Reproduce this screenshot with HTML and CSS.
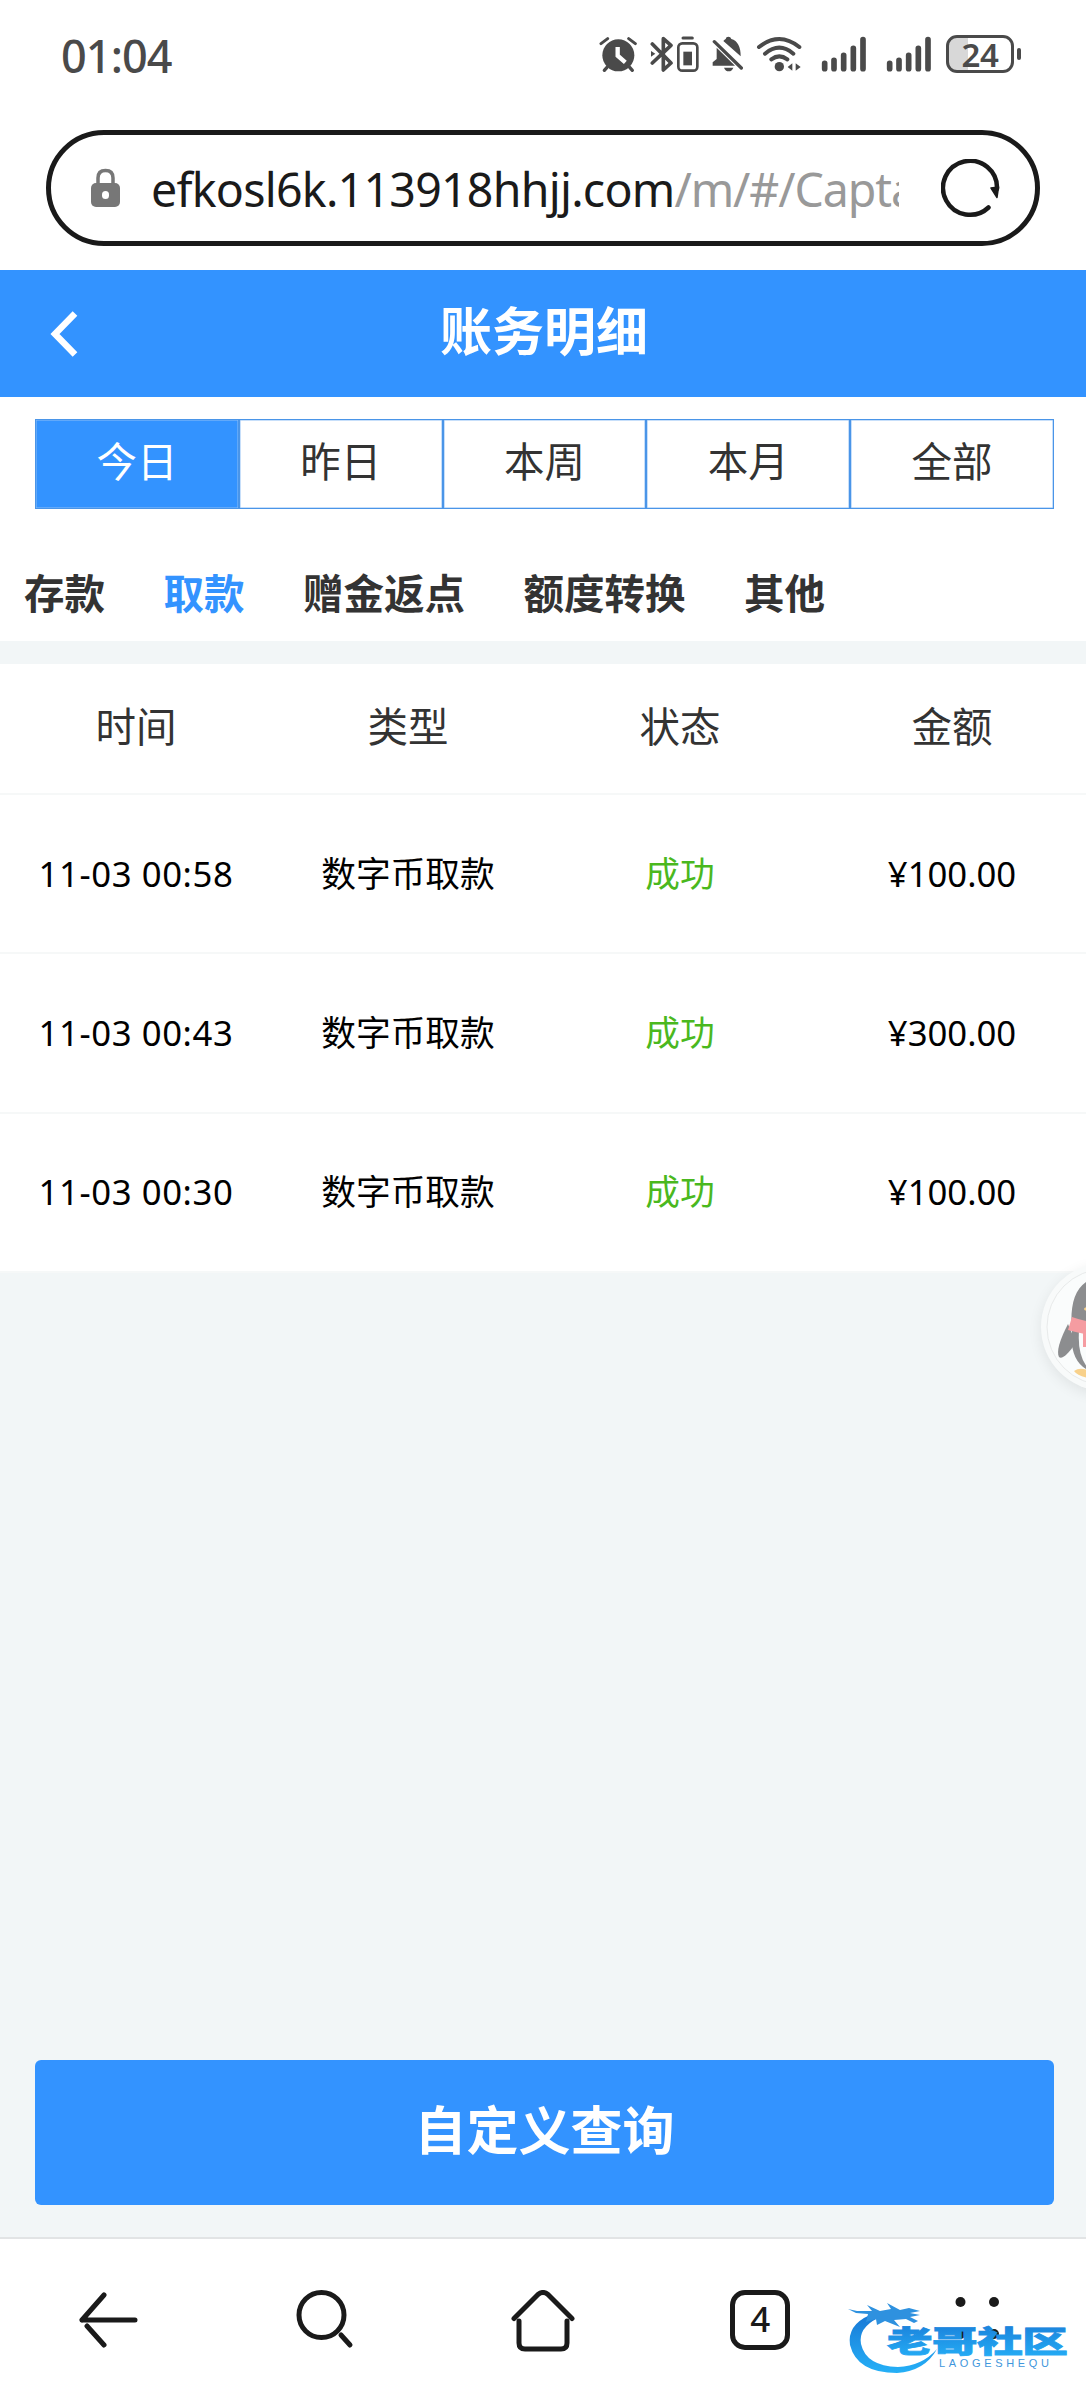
FILE: index.html
```html
<!DOCTYPE html>
<html lang="zh-CN">
<head>
<meta charset="utf-8">
<title>账务明细</title>
<link rel="stylesheet" href="styles.css">
</head>
<body>
<div class="screen">
  <div class="status">
    <span class="clock">01:04</span>
    <div class="status-icons">
      <svg width="38" height="42" viewBox="58 40 114 126" fill="none" stroke="#4a4a4a" stroke-linecap="round"><circle cx="116" cy="107" r="48" fill="#4a4a4a" stroke="none"/><path d="M64 72L84 57M147 57L167 72" stroke-width="9"/><path d="M82 143L74 152M150 143L158 152" stroke-width="10"/><path d="M114 82V108L137 128" stroke="#fff" stroke-width="13" stroke-linecap="butt"/></svg>
      <svg class="bt" width="50" height="42" viewBox="210 40 150 126" fill="none" stroke="#4a4a4a" stroke-linecap="round" stroke-linejoin="round"><path d="M217 73L273 130L250 151V57L273 77L217 130" stroke-width="11"/><path d="M213 94L226 102L213 111Z" fill="#4a4a4a" stroke="none"/><path d="M309 55H337" stroke-width="9"/><rect x="295" y="71" width="57" height="82" rx="12" stroke-width="8"/><path d="M310 96H336V137H310Z" fill="#4a4a4a" stroke="none"/></svg>
      <svg class="bell" width="32" height="42" viewBox="396 40 96 126" fill="#4a4a4a"><path d="M410 84L465 138H398V128L410 118ZM430 64Q434 59 437 58Q438 51 445 51Q452 51 454 58Q482 66 482 110ZM432 144H460Q456 155 446 155Q436 155 432 144Z"/><path d="M403 66L484 145" stroke="#4a4a4a" stroke-width="10" stroke-linecap="round"/></svg>
      <svg class="wifi" width="46" height="42" viewBox="528 40 138 126" fill="none" stroke="#4a4a4a" stroke-width="12" stroke-linecap="round"><path d="M537 82Q598 34 658 82M555 102Q598 66 640 102M574 119Q598 101 622 119"/><circle cx="598" cy="141" r="14" fill="#4a4a4a" stroke="none"/><path d="M637 131V153L623 142ZM647 131V153L662 142Z" fill="#4a4a4a" stroke="none"/></svg>
      <svg class="sig1" width="46" height="42" viewBox="725 40 138 126" stroke="#4a4a4a" stroke-width="17" stroke-linecap="round"><path d="M736 131V147M764 122V147M793 107V147M822 86V147M851 60V147"/></svg>
      <svg class="sig2" width="46" height="42" viewBox="725 40 138 126" stroke="#4a4a4a" stroke-width="17" stroke-linecap="round"><path d="M736 131V147M764 122V147M793 107V147M822 86V147M851 60V147"/></svg>
      <div class="battery"><span>24</span></div><i class="battery-tip"></i>
    </div>
  </div>

  <div class="address">
    <svg class="lock" width="30" height="40" viewBox="0 0 30 40"><rect x="1" y="15" width="29" height="24" rx="5" fill="#777"/><path d="M8 17V10Q8 2.500 15.500 2.500Q23 2.500 23 10V17" fill="none" stroke="#777" stroke-width="3.500"/><rect x="12" y="23" width="7" height="8" rx="3.500" fill="#fff"/></svg>
    <div class="url"><span class="host">efkosl6k.113918hhjj.com</span><span class="path">/m/#/Capta</span></div>
    <svg class="reload" width="60" height="60" viewBox="0 0 60 60"><path d="M47.500 48.500A27 27 0 1 1 56 30" fill="none" stroke="#1a1a1a" stroke-width="4.500" stroke-linecap="round"/><path d="M50 29L57.500 28L56 38.500Z" fill="#1a1a1a" stroke="#1a1a1a" stroke-width="1.500" stroke-linejoin="round"/></svg>
  </div>

  <header class="titlebar">
    <svg class="back" width="28" height="46" viewBox="0 0 28 46"><path d="M25 2.500L5 23L25 43.500" fill="none" stroke="#fff" stroke-width="6.500"/></svg>
    <h1>账务明细</h1>
  </header>

  <div class="filters">
    <div class="days">
      <span class="day on">今日</span><span class="day">昨日</span><span class="day">本周</span><span class="day">本月</span><span class="day">全部</span>
    </div>
    <div class="kinds"><span>存款</span><span class="active">取款</span><span>赠金返点</span><span>额度转换</span><span>其他</span></div>
  </div>

  <div class="table">
    <div class="row head"><span>时间</span><span>类型</span><span>状态</span><span>金额</span></div>
    <div class="row"><span class="time">11-03 00:58</span><span>数字币取款</span><span class="ok">成功</span><span>¥100.00</span></div>
    <div class="row"><span class="time">11-03 00:43</span><span>数字币取款</span><span class="ok">成功</span><span>¥300.00</span></div>
    <div class="row"><span class="time">11-03 00:30</span><span>数字币取款</span><span class="ok">成功</span><span>¥100.00</span></div>
  </div>

  <div class="footer"><div class="query">自定义查询</div></div>

  <nav class="nav">
    <span><svg width="60" height="60" viewBox="0 0 60 60"><path d="M3 30H56M3 30L25 5M8 36L25 55"/></svg></span>
    <span><svg width="60" height="60" viewBox="0 0 60 60"><circle cx="25.500" cy="25" r="22.500"/><path d="M45 45L54 55"/></svg></span>
    <span><svg width="64" height="64" viewBox="0 0 64 64"><path d="M3 28.500L27 4.500Q32 0.500 37 4.500L61 28.500M8 31V53Q8 59 14 59H50Q56 59 56 53V31"/></svg></span>
    <span><b class="tabs">4</b></span>
    <span><svg width="60" height="60" viewBox="0 0 60 60"><g fill="#1a1a1a" stroke="none"><circle cx="13.500" cy="12" r="5"/><circle cx="47" cy="12" r="5"/><circle cx="13.500" cy="44" r="5"/><circle cx="47" cy="44" r="5"/></g></svg></span>
  </nav>

  <div class="service">
    <svg width="128" height="128" viewBox="0 0 128 128"><circle cx="64" cy="64" r="58" fill="#fafcfc" stroke="#e8eaea"/><path d="M31 70C28 35 36 16 64 12S98 35 97 70Q100 108 64 112Q28 108 31 70Z" fill="#8c8d8f"/><path d="M27 61Q14 86 18 94Q22 98 35 80Z" fill="#8c8d8f"/><path d="M38 68Q36 96 50 108H90V68Z" fill="#fafcfc"/><path d="M31 54Q64 66 99 54V68Q64 78 27 67Z" fill="#f59ca1"/><path d="M42 68L53 71V84H42Z" fill="#f59ca1"/><ellipse cx="64" cy="46" rx="21" ry="4" fill="#f8d18b"/><path d="M33 108Q40 103 50 109L64 112L60 117Q38 115 33 108Z" fill="#f8d18b"/></svg>
  </div>

  <div class="watermark">
    <svg width="256" height="110" viewBox="0 0 256 110">
      <defs><linearGradient id="sea" x1="0" y1="0" x2="0" y2="1"><stop offset="0" stop-color="#1979d6"/><stop offset="1" stop-color="#25b0f7"/></linearGradient></defs>
      <path d="M40 35Q17 45 20 65Q27 93 67 93Q95 91 107 69Q92 86 68 87Q36 86 31 64Q28 48 48 38Z" fill="url(#sea)"/>
      <path d="M18 29L27 31L42 31L37 25L50 31L61 29L57 23L70 30L79 28L90 31L80 33L90 35L80 37L88 41L84 43L76 39L64 40L70 47L55 41L47 45L46 39L36 42L38 34L26 33Z" fill="#2e91df"/>
      <text class="wm-name" transform="translate(57 72) scale(1.520 1)" textLength="119" fill="url(#sea)" stroke="url(#sea)">老哥社区</text>
      <text class="wm-latin" x="109" y="87" textLength="110">LAOGESHEQU</text>
    </svg>
  </div>
</div>
</body>
</html>
```
FILE: styles.css
```css
* { box-sizing: border-box; }
body { margin: 0; background: #fff; }
.screen {
  position: relative;
  width: 1086px;
  height: 2400px;
  overflow: hidden;
  display: flex;
  flex-direction: column;
  background: #f2f6f7;
  font-family: "Noto Sans", "Noto Sans CJK SC", sans-serif;
  color: #333;
}
.status {
  height: 130px;
  padding: 33px 65px 0 61px;
  display: flex;
  justify-content: space-between;
  align-items: flex-start;
  background: #fff;
}
.clock { font-size: 45px; line-height: 45px; font-weight: 500; color: #4a4a4a; letter-spacing: -0.9px; }
.status-icons { display: flex; align-items: flex-start; }
.status-icons svg { display: block; flex: none; }
.bt { margin-left: 13px; }
.bell { margin-left: 12px; }
.wifi { margin-left: 12px; }
.sig1 { margin-left: 19px; }
.sig2 { margin-left: 19px; }
.battery {
  width: 68px;
  height: 38px;
  margin: 2px 0 0 14px;
  border: 3px solid #4a4a4a;
  border-radius: 11px;
  background: linear-gradient(to right, #d8d8d8 19px, #fff 19px);
  text-align: center;
}
.battery span { display: block; font-size: 33px; line-height: 33px; font-weight: 600; letter-spacing: -0.5px; color: #4a4a4a; }
.battery-tip { width: 4px; height: 12px; margin: 15px 0 0 3px; border-radius: 3px; background: #4a4a4a; }
.address {
  height: 116px;
  width: 994px;
  align-self: center;
  border: 5px solid #1a1a1a;
  border-radius: 58px;
  padding: 0 35px 0 39px;
  display: flex;
  align-items: center;
  background: #fff;
  box-shadow: 0 0 0 100px #fff;
  clip-path: inset(0 -50px -24px -50px);
}
.lock { flex: none; }
.url { margin-left: 31px; width: 748px; overflow: hidden; white-space: nowrap; font-size: 46.5px; line-height: 70px; padding-top: 2px; color: #1a1a1a; flex: none; }
.host { letter-spacing: -0.75px; }
.path { color: #999; letter-spacing: -1.1px; }
.reload { margin-left: 42px; flex: none; position: relative; top: 1px; }
.titlebar {
  height: 127px;
  margin-top: 24px;
  padding-left: 50px;
  display: grid;
  grid-template-columns: 28px 1fr 76px;
  align-items: center;
  background: #3393ff;
}
.titlebar h1 { margin: 0 0 5px; text-align: center; font-size: 52px; line-height: 70px; font-weight: 700; color: #fff; }
.filters { background: #fff; height: 244px; padding-top: 22px; }
.days { display: flex; margin: 0 32px 0 35px; height: 90px; }
.day {
  flex: 1;
  border: 1.5px solid #4a95e8;
  box-shadow: inset 0 0 0 0.5px #8fc0f5;
  font-size: 40.5px;
  line-height: 83px;
  text-align: center;
}
.day.on { background: #3393ff; color: #fff; }
.kinds { display: flex; gap: 58.5px; padding-left: 24px; margin-top: 56px; font-size: 40.5px; line-height: 58px; font-weight: 700; }
.kinds .active { color: #3393ff; }
.table { margin-top: 23px; background: #fff; }
.row {
  display: grid;
  grid-template-columns: repeat(4, 272px);
  height: 159.4px;
  align-items: center;
  text-align: center;
  font-size: 34.7px;
  line-height: 50px;
  color: #000;
  border-bottom: 2px solid #f6f8f8;
}
.row.head { height: 131px; font-size: 40.5px; color: #333; padding-bottom: 3px; }
.row .time { letter-spacing: 0.6px; }
.row .ok { color: #4ab81e; }
.footer { margin-top: auto; padding: 0 32px 32px 35px; }
.query { height: 145px; border-radius: 6px; background: #3393ff; color: #fff; font-size: 52px; line-height: 140px; font-weight: 700; text-align: center; }
.nav {
  height: 163px;
  border-top: 2px solid #e2e4e5;
  background: #fff;
  display: grid;
  grid-template-columns: repeat(5, 1fr);
}
.nav span { display: flex; justify-content: center; padding-top: 51px; }
.nav svg { fill: none; stroke: #1a1a1a; stroke-width: 5; stroke-linecap: round; stroke-linejoin: round; }
.tabs { width: 60px; height: 60px; border: 5px solid #1a1a1a; border-radius: 15px; font-size: 35px; line-height: 47px; font-weight: 500; text-align: center; color: #1a1a1a; }
.service {
  position: absolute;
  left: 1041px;
  top: 1263px;
  width: 128px;
  height: 128px;
  border-radius: 50%;
  background: #f8fafa;
  box-shadow: 0 4px 14px rgba(0, 0, 0, 0.08);
}
.watermark { position: absolute; left: 830px; top: 2280px; width: 256px; height: 110px; }
.wm-name { font: 900 30px "Noto Sans CJK SC", sans-serif; stroke-width: 0.8px; }
.wm-latin { font: 400 11px "Liberation Sans", sans-serif; fill: #3f97dc; }
```
